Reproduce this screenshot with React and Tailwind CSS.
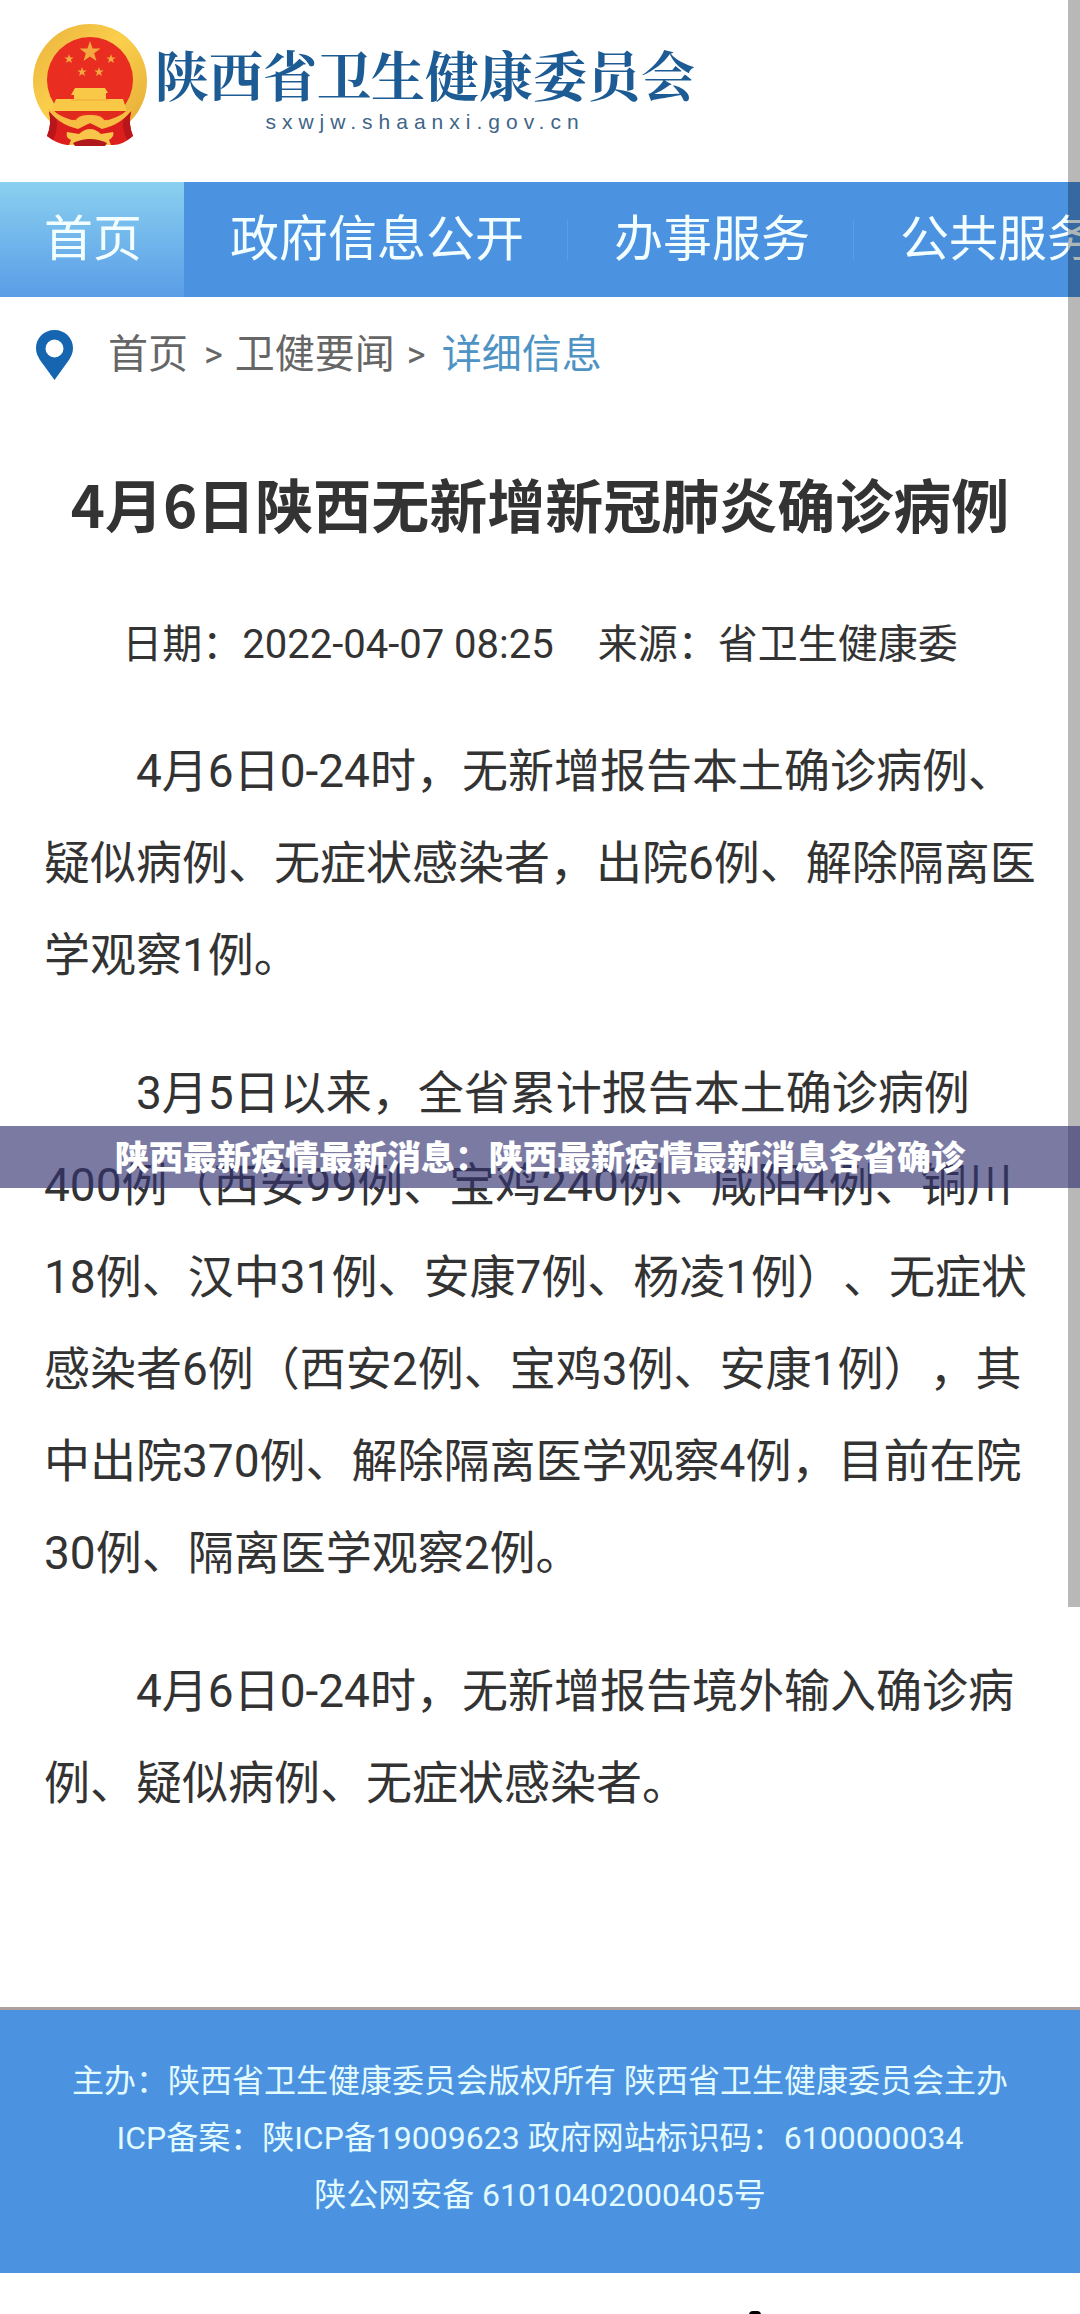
const SANS = "font-[Roboto,'Noto_Sans_CJK_SC',sans-serif]";

function Star({ x, y, r }) {
  const points = Array.from({ length: 10 }, (_, i) => {
    const radius = i % 2 === 0 ? r : r * 0.4;
    const angle = (Math.PI / 5) * i - Math.PI / 2;
    return `${(x + radius * Math.cos(angle)).toFixed(2)},${(y + radius * Math.sin(angle)).toFixed(2)}`;
  }).join(" ");
  return <polygon points={points} fill="#f3a93f" />;
}

function Emblem() {
  return (
    <svg viewBox="0 0 114 122" className="h-[122px] w-[114px] shrink-0" aria-hidden="true">
      <defs>
        <linearGradient id="gold" x1="0" y1="0" x2="1" y2="1">
          <stop offset="0" stopColor="#e9b23c" />
          <stop offset="0.45" stopColor="#fbcf4c" />
          <stop offset="1" stopColor="#e3a935" />
        </linearGradient>
      </defs>
      <circle cx="57" cy="57" r="57" fill="url(#gold)" />
      <path d="M16 87 Q28 99 43 103 L57 99 L71 103 Q86 99 98 87 Q95 100 100 112 Q90 121 80 121 L34 121 Q24 120 14 112 Q19 100 16 87Z" fill="#dc1f1c" />
      <path d="M16 87 Q19 100 14 112 L20 116 Q26 104 23 93Z" fill="#b8161b" />
      <path d="M98 87 Q95 100 100 112 L94 116 Q88 104 91 93Z" fill="#b8161b" />
      <circle cx="57" cy="56" r="43" fill="#e92d20" />
      <Star x={57} y={28} r={11} />
      <Star x={36} y={35} r={5} />
      <Star x={78} y={35} r={5} />
      <Star x={49} y={48} r={5} />
      <Star x={66} y={48} r={5} />
      <path d="M42 64 H72 L75 69 H73 V75 H90 L94 87 H18 L23 75 H41 V71 H38Z" fill="#f8c846" />
      <path d="M38 76 H76" stroke="#efa83a" strokeWidth="1" />
      <path d="M21 87 H93 Q87 93 76 98 Q68 88 57 89 Q46 88 38 98 Q27 93 21 87Z" fill="#e02a1e" />
      <path d="M14 84 L20 87 Q28 93 42 97 Q46 90 57 91 Q68 90 72 97 Q86 93 94 87 L100 84 Q90 100 69 105 L57 99 L45 105 Q24 100 14 84Z" fill="#f6bd42" />
      <path d="M34 108 L46 110 Q57 100 68 110 L80 108 Q82 112 76 116 L78 121 H72 Q57 112 42 121 H36 L38 116 Q32 113 34 108Z" fill="#f8c54a" />
      <path d="M40 119 Q57 111 74 119 L72 122 H42Z" fill="#b0181c" />
    </svg>
  );
}

function Pin() {
  return (
    <svg viewBox="0 0 37 50" className="h-[50px] w-[37px] shrink-0" aria-hidden="true">
      <path
        fillRule="evenodd"
        fill="#1565b0"
        d="M18.500 0C8 0 0 8 0 18C0 25 4 30 8 35.500L18.500 50L29 35.500C33 30 37 25 37 18C37 8 29 0 18.500 0ZM18.500 9.500A9 9 0 1 1 18.500 27.500A9 9 0 1 1 18.500 9.500Z"
      />
    </svg>
  );
}

const navItems = ["政府信息公开", "办事服务", "公共服务"];

const paragraphs = [
  "4月6日0-24时，无新增报告本土确诊病例、疑似病例、无症状感染者，出院6例、解除隔离医学观察1例。",
  "3月5日以来，全省累计报告本土确诊病例400例（西安99例、宝鸡240例、咸阳4例、铜川18例、汉中31例、安康7例、杨凌1例）、无症状感染者6例（西安2例、宝鸡3例、安康1例），其中出院370例、解除隔离医学观察4例，目前在院30例、隔离医学观察2例。",
  "4月6日0-24时，无新增报告境外输入确诊病例、疑似病例、无症状感染者。",
];

export default function App() {
  return (
    <div lang="zh-CN" className={`relative overflow-hidden bg-white text-[#333] [text-spacing-trim:space-all] ${SANS}`}>
      <header className="flex h-[182px] items-start gap-2 pt-6 pl-[33px]">
        <Emblem />
        <div className="flex flex-col items-center pt-5">
          <p className="font-['Noto_Serif_CJK_SC','Noto_Sans_CJK_SC',serif] text-[54px] leading-[60px] font-bold whitespace-nowrap text-[#1d5b94]">
            陕西省卫生健康委员会
          </p>
          <p className="font-['Liberation_Sans',sans-serif] text-[21px] leading-[36px] tracking-[6px] text-[#3f6588]">
            sxwjw.shaanxi.gov.cn
          </p>
        </div>
      </header>

      <nav className="flex h-[115px] overflow-hidden bg-[#4b92e1] text-[49px] whitespace-nowrap text-[#f2feff]">
        <a href="#home" className="flex shrink-0 items-center bg-linear-to-b from-[#8ad0ef] to-[#5a9de7] pr-[42px] pl-11">
          首页
        </a>
        {navItems.map((item, i) => (
          <div key={item} className="flex shrink-0 items-center">
            <a href={`#nav-${i}`} className="pr-[43px] pl-[46px]">
              {item}
            </a>
            <span className="h-10 w-px bg-[#5b9de6]" />
          </div>
        ))}
      </nav>

      <div className="flex h-[112px] items-center gap-[35px] pt-1 pl-9 text-[40px] text-[#666]">
        <Pin />
        <div className="flex items-center whitespace-nowrap">
          <a href="#home">首页</a>
          <span className="pr-3 pl-4 text-[36px]">&gt;</span>
          <a href="#news">卫健要闻</a>
          <span className="pr-4 pl-3 text-[36px]">&gt;</span>
          <a href="#detail" className="text-[#4f93c4]">
            详细信息
          </a>
        </div>
      </div>

      <main className="px-11 pb-[178px]">
        <h1 className="-mx-2 pt-[54px] text-center font-['Noto_Sans_CJK_SC',sans-serif] text-[58px] leading-[80px] font-bold">
          4月6日陕西无新增新冠肺炎确诊病例
        </h1>
        <div className="mt-[72px] flex justify-center gap-11 text-[40px] leading-[60px] whitespace-nowrap">
          <span>日期：2022-04-07 08:25</span>
          <span>来源：省卫生健康委</span>
        </div>
        <article className="mt-[50px] space-y-[46px] text-[46px] leading-[92px]">
          {paragraphs.map((text) => (
            <p key={text} className="indent-[92px]">
              {text}
            </p>
          ))}
        </article>
      </main>

      <footer className="h-[266px] border-t-3 border-[#b0a09d] bg-[#4b92e1] pt-[43px] text-center text-[32px] leading-[57px] text-[#e2fbff]">
        <p>主办：陕西省卫生健康委员会版权所有 陕西省卫生健康委员会主办</p>
        <p>ICP备案：陕ICP备19009623 政府网站标识码：6100000034</p>
        <p>陕公网安备 61010402000405号</p>
      </footer>

      <div className="flex h-[42px] items-end pl-[69%]">
        <span className="ml-1 h-1 w-3 rounded-t-full bg-black" />
      </div>

      <div className="absolute top-0 right-0 h-[1607px] w-3 bg-black/28" />

      <div className="absolute inset-x-0 top-[1126px] flex h-[62px] items-center justify-center bg-[#323272]/65 pb-1 font-['Noto_Sans_CJK_SC',sans-serif] text-[34px] font-black whitespace-nowrap text-white">
        陕西最新疫情最新消息：陕西最新疫情最新消息各省确诊
      </div>
    </div>
  );
}
